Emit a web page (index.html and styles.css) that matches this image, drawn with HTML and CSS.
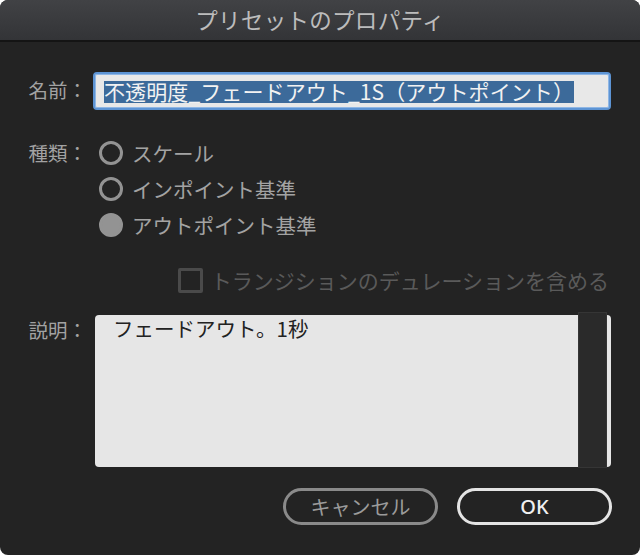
FILE: index.html
```html
<!DOCTYPE html>
<html lang="ja">
<head>
<meta charset="utf-8">
<title>プリセットのプロパティ</title>
<link rel="stylesheet" href="styles.css">
</head>
<body>
<div class="dialog">
  <div class="titlebar">プリセットのプロパティ</div>
  <div class="content">
    <div class="form">
      <div class="label name-label">名前：</div>
      <div class="input"><span class="sel">不透明度_フェードアウト_1S（アウトポイント）</span></div>

      <div class="label kind-label">種類：</div>
      <div class="radios">
        <div class="radio"><span class="circle"></span><span>スケール</span></div>
        <div class="radio"><span class="circle"></span><span>インポイント基準</span></div>
        <div class="radio"><span class="circle filled"></span><span>アウトポイント基準</span></div>
      </div>

      <div></div>
      <div class="check-row"><span class="box"></span><span>トランジションのデュレーションを含める</span></div>

      <div class="label desc-label">説明：</div>
      <div class="textarea">
        <div class="text">フェードアウト。1秒</div>
        <div class="scroll"></div>
      </div>
    </div>
    <div class="buttons">
      <div class="btn cancel">キャンセル</div>
      <div class="btn ok">OK</div>
    </div>
  </div>
</div>
</body>
</html>
```

FILE: styles.css
```css
html, body {
  margin: 0;
  padding: 0;
  background: #ffffff;
}
body {
  font-family: "Noto Sans CJK JP", "Noto Sans", sans-serif;
}
.dialog {
  width: 640px;
  height: 555px;
  background: #232323;
  border-radius: 8px;
  overflow: hidden;
  display: flex;
  flex-direction: column;
}
.titlebar {
  height: 40px;
  background: linear-gradient(#414245, #333437);
  border-top: 1px solid #505154;
  border-bottom: 2px solid #141414;
  box-sizing: content-box;
  color: #bcbcbc;
  font-size: 22.5px;
  line-height: 38px;
  text-align: center;
  letter-spacing: 0.3px;
  margin-top: -1px;
}
.content {
  padding: 30px 29px 0 0;
  display: flex;
  flex-direction: column;
}
.form {
  display: grid;
  grid-template-columns: 87px 1fr;
  column-gap: 6px;
}
.label {
  color: #a2a2a2;
  font-size: 19.5px;
  text-align: right;
  white-space: nowrap;
}
.name-label {
  align-self: center;
  margin-top: -4px;
}
.input {
  height: 38px;
  box-sizing: border-box;
  border: 2px solid #5d94d4;
  border-radius: 4px;
  background: #e8e8e8;
  box-shadow: inset 0 0 0 1px #8fb6e4;
  padding: 7px 0 0 9px;
  overflow: hidden;
}
.sel {
  display: inline-block;
  vertical-align: top;
  background: #3c6a9a;
  color: #f2f2f2;
  font-size: 21px;
  line-height: 20px;
  height: 20px;
  padding-bottom: 2px;
  white-space: nowrap;
  letter-spacing: 0.1px;
}
.kind-label {
  margin-top: 25px;
  line-height: 36px;
}
.radios {
  margin-top: 25px;
  display: flex;
  flex-direction: column;
}
.radio {
  height: 36px;
  display: flex;
  align-items: center;
  padding-left: 6px;
  gap: 9px;
  color: #a3a3a3;
  font-size: 20.5px;
}
.circle {
  width: 24px;
  height: 24px;
  box-sizing: border-box;
  border: 3px solid #939393;
  border-radius: 50%;
}
.circle.filled {
  background: #939393;
}
.check-row {
  margin-top: 23px;
  height: 28px;
  display: flex;
  align-items: center;
  justify-content: flex-end;
  gap: 8px;
  padding-right: 2px;
  color: #5a5a5a;
  font-size: 21px;
  white-space: nowrap;
}
.box {
  width: 25px;
  height: 25px;
  box-sizing: border-box;
  border: 3px solid #4a4a4a;
  border-radius: 2px;
}
.desc-label {
  margin-top: 21px;
  line-height: 30px;
}
.textarea {
  margin-top: 21px;
  margin-left: 2px;
  height: 152px;
  background: #e6e6e6;
  border-radius: 4px;
  display: flex;
  padding-right: 4px;
}
.text {
  flex: 1;
  padding: 0 18px;
  color: #222222;
  font-size: 20.5px;
  line-height: 26px;
}
.scroll {
  width: 29px;
  box-sizing: border-box;
  background: #2a2a2a;
  border: 1px solid #353535;
  margin-top: -3px;
  margin-bottom: -1px;
}
.buttons {
  margin-top: 21px;
  display: flex;
  justify-content: flex-end;
  gap: 19px;
  margin-right: -1px;
}
.btn {
  width: 155px;
  height: 37px;
  box-sizing: border-box;
  border-radius: 19px;
  display: flex;
  align-items: center;
  justify-content: center;
  font-size: 20px;
}
.cancel {
  border: 3px solid #8a8a8a;
  color: #9b9b9b;
}
.ok {
  border: 3px solid #e4e4e4;
  color: #f0f0f0;
  font-family: "Noto Sans", sans-serif;
  font-weight: 500;
}
```
